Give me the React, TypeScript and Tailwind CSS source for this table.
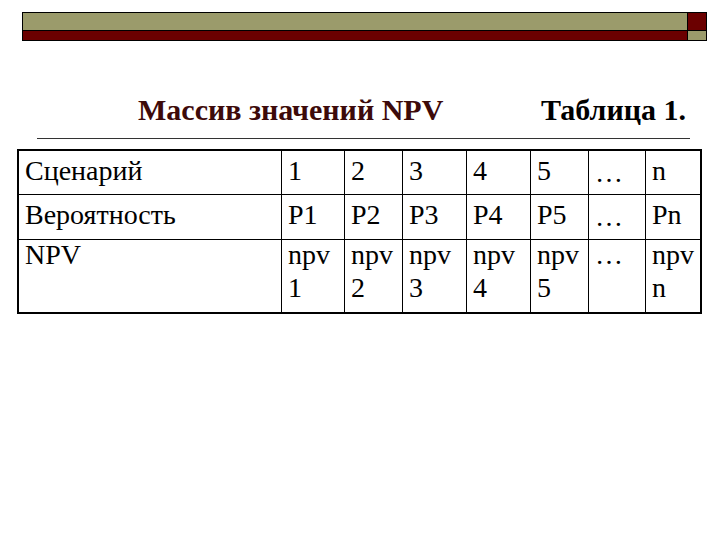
import React from "react";

const widths = ["w-[263px]", "w-[63px]", "w-[58px]", "w-[64px]", "w-[64px]", "w-[58px]", "w-[57px]", "w-[54px]"];

const rows: string[][] = [
  ["Сценарий", "1", "2", "3", "4", "5", "…", "n"],
  ["Вероятность", "P1", "P2", "P3", "P4", "P5", "…", "Pn"],
  ["NPV", "npv 1", "npv 2", "npv 3", "npv 4", "npv 5", "…", "npv n"],
];

export default function App() {
  return (
    <div className="w-[720px] h-[540px] bg-white text-black overflow-hidden pt-[12px] font-['Liberation_Serif','Times_New_Roman',serif]">
      {/* top decorative bar */}
      <div className="ml-[22px] flex w-[685px]">
        <div className="flex flex-col w-[666px]">
          <div className="h-[18px] bg-[#9b9b6b] border border-black border-b-0"></div>
          <div className="h-[11px] bg-[#6b0000] border border-black"></div>
        </div>
        <div className="flex flex-col w-[19px]">
          <div className="h-[18px] bg-[#6b0000] border border-black border-l-0 border-b-0"></div>
          <div className="h-[11px] bg-[#9b9b6b] border border-black border-l-0"></div>
        </div>
      </div>

      {/* title row */}
      <div className="mt-[53px] ml-[138px] w-[548px] flex justify-between text-[30px] leading-[32px] font-bold">
        <span className="text-[#3d0a0a]">Массив значений NPV</span>
        <span className="text-black">Таблица 1.</span>
      </div>

      {/* divider */}
      <div className="mt-[12px] ml-[37px] w-[653px] h-px bg-[#333]"></div>

      {/* table */}
      <div className="mt-[10px] ml-[17px] w-[685px] border-2 border-black text-[28px]">
        {rows.map((row, ri) => (
          <div
            key={ri}
            className={
              "flex " +
              (ri === 0 ? "h-[44px] border-b border-black" : ri === 1 ? "h-[45px] border-b border-black" : "h-[72px]")
            }
          >
            {row.map((cell, ci) => (
              <div
                key={ci}
                className={
                  widths[ci] +
                  " shrink-0 pl-[6px] " +
                  (ci < row.length - 1 ? "border-r border-black " : "") +
                  (ri === 2 ? "leading-[33px] pt-0" : "leading-[32px] pt-[4px]")
                }
              >
                {ri === 2 ? (
                  <div className="-mt-[2px] flex flex-col">
                    {cell.split(" ").map((part, pi) => (
                      <span key={pi}>{part}</span>
                    ))}
                  </div>
                ) : ci === 6 ? (
                  <span className="inline-block translate-y-[2px]">{cell}</span>
                ) : (
                  <span>{cell}</span>
                )}
              </div>
            ))}
          </div>
        ))}
      </div>
    </div>
  );
}
